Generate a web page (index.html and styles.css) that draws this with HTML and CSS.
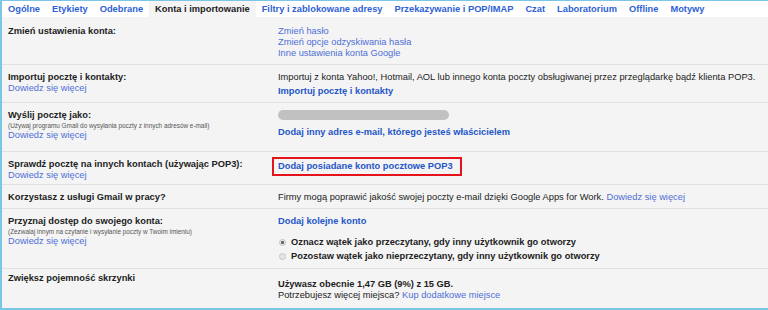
FILE: index.html
```html
<!DOCTYPE html>
<html lang="pl">
<head>
  <meta charset="UTF-8" />
  <meta name="viewport" content="width=device-width, initial-scale=1.0"/>
  <title>Ustawienia - Konta i importowanie</title>
  <link rel="stylesheet" href="styles.css">
</head>
<body>
  <div class="frame">
    <div class="tabs">
      <a class="tab" href="#">Ogólne</a>
      <a class="tab" href="#">Etykiety</a>
      <a class="tab" href="#">Odebrane</a>
      <span class="tab tab-active">Konta i importowanie</span>
      <a class="tab" href="#">Filtry i zablokowane adresy</a>
      <a class="tab" href="#">Przekazywanie i POP/IMAP</a>
      <a class="tab" href="#">Czat</a>
      <a class="tab" href="#">Laboratorium</a>
      <a class="tab" href="#">Offline</a>
      <a class="tab" href="#">Motywy</a>
    </div>

    <div class="row row-first">
      <div class="label"><b>Zmień ustawienia konta:</b></div>
      <div class="value">
        <a class="link" href="#">Zmień hasło</a><br>
        <a class="link" href="#">Zmień opcje odzyskiwania hasła</a><br>
        <a class="link" href="#">Inne ustawienia konta Google</a>
      </div>
    </div>

    <div class="row">
      <div class="label">
        <b>Importuj pocztę i kontakty:</b><br>
        <a class="link" href="#">Dowiedz się więcej</a>
      </div>
      <div class="value">
        Importuj z konta Yahoo!, Hotmail, AOL lub innego konta poczty obsługiwanej przez przeglądarkę bądź klienta POP3.
        <div class="action"><a class="link-bold" href="#">Importuj pocztę i kontakty</a></div>
      </div>
    </div>

    <div class="row row-send">
      <div class="label">
        <b>Wyślij pocztę jako:</b>
        <div class="hint">(Używaj programu Gmail do wysyłania poczty z innych adresów e-mail)</div>
        <a class="link" href="#">Dowiedz się więcej</a>
      </div>
      <div class="value">
        <div class="masked"></div>
        <div class="action-wide"><a class="link-bold" href="#">Dodaj inny adres e-mail, którego jesteś właścicielem</a></div>
      </div>
    </div>

    <div class="row row-pop">
      <div class="label">
        <b>Sprawdź pocztę na innych kontach (używając POP3):</b><br>
        <a class="link" href="#">Dowiedz się więcej</a>
      </div>
      <div class="value value-pop">
        <a class="link-bold marked" href="#">Dodaj posiadane konto pocztowe POP3</a>
      </div>
    </div>

    <div class="row">
      <div class="label"><b>Korzystasz z usługi Gmail w pracy?</b></div>
      <div class="value">
        Firmy mogą poprawić jakość swojej poczty e-mail dzięki Google Apps for Work. <a class="link" href="#">Dowiedz się więcej</a>
      </div>
    </div>

    <div class="row row-delegate">
      <div class="label">
        <b>Przyznaj dostęp do swojego konta:</b>
        <div class="hint">(Zezwalaj innym na czytanie i wysyłanie poczty w Twoim imieniu)</div>
        <a class="link" href="#">Dowiedz się więcej</a>
      </div>
      <div class="value">
        <a class="link-bold" href="#">Dodaj kolejne konto</a>
        <div class="options">
          <label class="option"><input type="radio" name="mark" checked> Oznacz wątek jako przeczytany, gdy inny użytkownik go otworzy</label>
          <label class="option"><input type="radio" name="mark"> Pozostaw wątek jako nieprzeczytany, gdy inny użytkownik go otworzy</label>
        </div>
      </div>
    </div>

    <div class="row row-last">
      <div class="label"><b>Zwiększ pojemność skrzynki</b></div>
      <div class="value value-storage">
        <b>Używasz obecnie 1,47 GB (9%) z 15 GB.</b><br>
        Potrzebujesz więcej miejsca? <a class="link" href="#">Kup dodatkowe miejsce</a>
      </div>
    </div>
  </div>
</body>
</html>
```

FILE: styles.css
```css
body {
  margin: 0;
  font-family: "Liberation Sans", Arial, sans-serif;
  font-size: 9.3px;
  line-height: 11px;
  color: #222;
  overflow: hidden;
}
.frame {
  height: 310px;
  box-sizing: border-box;
  border-top: 1px solid #7cc6e5;
  border-left: 2px solid #7cc6e5;
  border-bottom: 2px solid #7cc6e5;
  background: #f4f4f4;
}
.tabs {
  display: flex;
  height: 16px;
  background: white;
}
.tab {
  padding: 0 6px;
  line-height: 16px;
  font-weight: bold;
  color: #2f5fd4;
  text-decoration: none;
  white-space: nowrap;
}
.tab-active {
  background: #f4f4f4;
  color: #222;
}
.row {
  display: grid;
  grid-template-columns: 270px 1fr;
  padding: 7px 0 5px 6px;
  border-bottom: 1px solid #e0e0e0;
}
.row-first {
  padding-top: 9px;
}
.row-send {
  padding-bottom: 10px;
}
.row-pop {
  padding-bottom: 3px;
}
.row-delegate {
  padding-bottom: 5px;
}
.row-last {
  padding-top: 4px;
  border-bottom: none;
}
.link {
  color: #4f6fd6;
  text-decoration: none;
}
.link-bold {
  color: #2556c8;
  font-weight: bold;
  text-decoration: none;
}
.hint {
  font-size: 6.4px;
  line-height: 9px;
  color: #555;
}
.action {
  margin-top: 3px;
}
.masked {
  width: 171px;
  height: 10px;
  border-radius: 5px;
  background: #c1c1c1;
}
.action-wide {
  margin-top: 7px;
}
.value-pop {
  padding-top: 2px;
}
.marked {
  display: inline-block;
  border: 2px solid #e5141c;
  padding: 2px 7px 2px 4px;
  margin: -4px 0 -4px -6px;
}
.options {
  margin-top: 8px;
}
.option {
  display: flex;
  align-items: center;
  line-height: 14px;
  font-weight: bold;
  color: #222;
}
.option input {
  appearance: none;
  width: 7px;
  height: 7px;
  margin: 0 5px 0 1px;
  border: 1px solid #c4c4c4;
  border-radius: 50%;
  background: #e6e6e6;
  box-sizing: border-box;
}
.option input:checked {
  background: radial-gradient(circle, #666 0, #666 1.3px, #e6e6e6 1.8px);
}
.value-storage {
  padding-top: 6px;
}
```
